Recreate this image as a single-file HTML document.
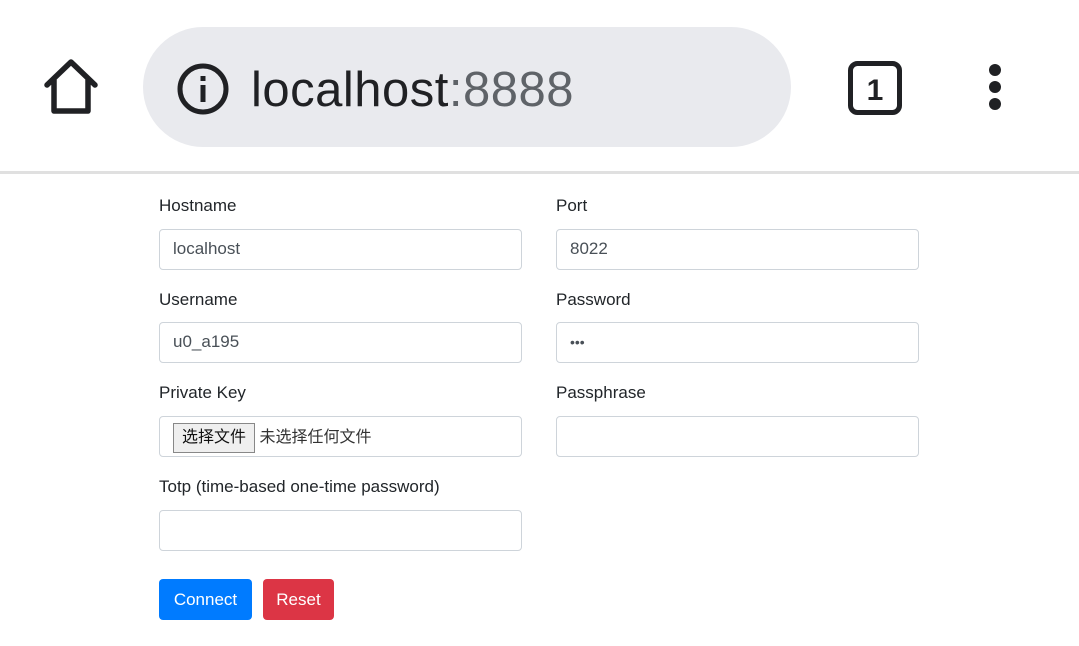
<!DOCTYPE html>
<html><head><meta charset="utf-8"><style>
*{box-sizing:border-box;margin:0;padding:0}
body{width:1079px;height:646px;background:#fff;position:relative;overflow:hidden;font-family:"Liberation Sans","Noto Sans CJK SC",sans-serif;color:#212529}
.pill{position:absolute;left:143px;top:27px;width:648px;height:120px;border-radius:60px;background:#e9eaee}
.url{position:absolute;left:251px;top:62px;font-size:49px;color:#202124;letter-spacing:0.5px}
.url span{color:#5f6368}
.line{position:absolute;left:0;top:171px;width:1079px;height:3px;background:#e0e0e0}
.lbl{position:absolute;font-size:17px}
.inp{position:absolute;width:363px;height:41px;border:1px solid #ced4da;border-radius:4px;font-size:17px;padding:9px 13px;color:#495057}
.btn{position:absolute;top:579px;height:41px;border-radius:4px;color:#fff;font-size:17px;text-align:center;line-height:41px}
</style></head><body>
<svg style="position:absolute;left:40px;top:56px" width="62" height="62" viewBox="0 0 62 62"><path d="M7 29 L31 6 L55 29 M14 24 V55 H48 V24" fill="none" stroke="#202124" stroke-width="5.5" stroke-linejoin="round" stroke-linecap="round"/></svg>
<div class="pill"></div>
<svg style="position:absolute;left:176px;top:62px" width="54" height="54" viewBox="0 0 54 54"><circle cx="27" cy="27" r="23" fill="none" stroke="#202124" stroke-width="5"/><rect x="24.5" y="23" width="5" height="17" fill="#202124"/><rect x="24.5" y="14" width="5" height="5" fill="#202124"/></svg>
<div class="url">localhost<span>:8888</span></div>
<svg style="position:absolute;left:846px;top:59px" width="58" height="58" viewBox="0 0 58 58"><rect x="4.5" y="4.5" width="49" height="49" rx="7" fill="none" stroke="#202124" stroke-width="5"/><text x="29" y="41" font-family="Liberation Sans" font-weight="bold" font-size="30" text-anchor="middle" fill="#202124">1</text></svg>
<svg style="position:absolute;left:984px;top:60px" width="22" height="54"><circle cx="11" cy="10" r="6" fill="#202124"/><circle cx="11" cy="27" r="6" fill="#202124"/><circle cx="11" cy="44" r="6" fill="#202124"/></svg>
<div class="line"></div>
<div class="lbl" style="left:159px;top:196px">Hostname</div>
<div class="lbl" style="left:556px;top:196px">Port</div>
<div class="inp" style="left:159px;top:229px">localhost</div>
<div class="inp" style="left:556px;top:229px">8022</div>
<div class="lbl" style="left:159px;top:290px">Username</div>
<div class="lbl" style="left:556px;top:290px">Password</div>
<div class="inp" style="left:159px;top:322px">u0_a195</div>
<div class="inp" style="left:556px;top:322px;font-size:14px;padding-top:11px">•••</div>
<div class="lbl" style="left:159px;top:383px">Private Key</div>
<div class="lbl" style="left:556px;top:383px">Passphrase</div>
<div class="inp" style="left:159px;top:416px;padding:6px 13px;font-size:16px;color:#333"><span style="display:inline-block;border:1px solid #888;background:#efefef;padding:1px 8px;height:30px;line-height:26px;color:#111">选择文件</span> 未选择任何文件</div>
<div class="inp" style="left:556px;top:416px"></div>
<div class="lbl" style="left:159px;top:477px">Totp (time-based one-time password)</div>
<div class="inp" style="left:159px;top:510px"></div>
<div class="btn" style="left:159px;width:93px;background:#007bff">Connect</div>
<div class="btn" style="left:263px;width:71px;background:#dc3545">Reset</div>
</body></html>
